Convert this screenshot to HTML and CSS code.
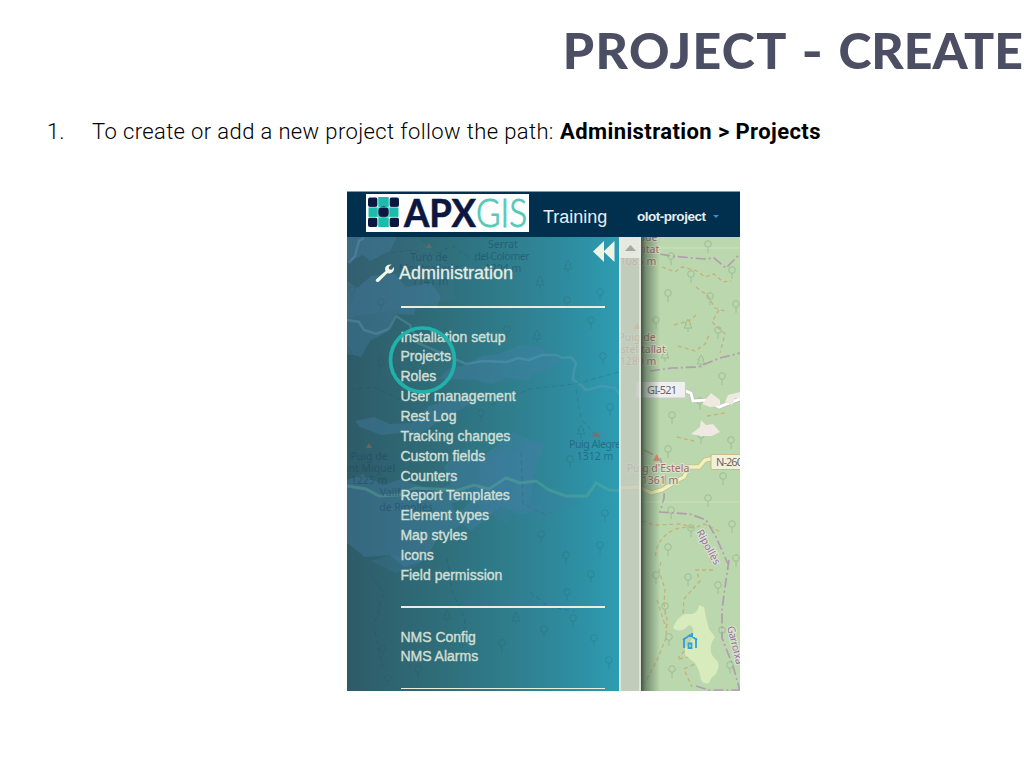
FILE: index.html
```html
<!DOCTYPE html>
<html lang="en">
<head>
<meta charset="utf-8">
<title>Project - Create</title>
<link rel="stylesheet" href="styles.css">
</head>
<body>
<main class="slide">
<h1 class="title"><span class="word">PROJECT</span> <span class="dash">-</span> <span>CREATE</span></h1>
<div class="step"><span class="number">1.</span><p><span class="lead">To create or add a new project follow the path:</span><strong>Administration &gt; Projects</strong></p></div>
<section class="app">
<header class="bar">
<svg class="logo" width="163" height="38" viewBox="366 194 163 38">
<rect x="366" y="194" width="163" height="38" fill="#fff"/>
<g fill="#1bbcae"><rect x="378" y="197" width="11" height="30"/><rect x="368.5" y="207" width="30" height="10"/></g>
<g fill="#0b1741"><rect x="368" y="197.5" width="9.5" height="9.5" rx="2"/><rect x="389.5" y="197.500" width="9.500" height="9.500" rx="2"/><circle cx="383.500" cy="212" r="5.700"/><rect x="368" y="217.500" width="9.500" height="9.500" rx="2"/><rect x="389.500" y="217.500" width="9.500" height="9.500" rx="2"/></g>
<g fill="none" stroke="#fff" stroke-width=".5"><path d="M368 207.300h31M368 217.300h31M378 197v31M389 197v31"/></g>
<text x="404" y="226.500" class="brand" textLength="72" lengthAdjust="spacingAndGlyphs" fill="#0b1741">APX</text>
<text x="476" y="226.500" class="brand thin" textLength="51" lengthAdjust="spacingAndGlyphs" fill="#56c9b7">GIS</text>
</svg>
<span class="env">Training</span><span class="proj">olot-project</span><i class="caret"></i>
</header>
<div class="body">
<svg class="map" width="393" height="454" viewBox="347 237 393 454">
<defs>
<linearGradient id="panel"><stop offset="0" stop-color="#2e5b68"/><stop offset=".35" stop-color="#2f6e7a"/><stop offset=".75" stop-color="#2f8799"/><stop offset="1" stop-color="#2d9cb2"/></linearGradient>
<linearGradient id="shade"><stop offset="0" stop-color="#2c3b2e" stop-opacity=".85"/><stop offset=".25" stop-color="#3c503e" stop-opacity=".55"/><stop offset="1" stop-color="#3c503e" stop-opacity="0"/></linearGradient>
<g id="tree" fill="none" stroke-width="1"><circle r="3.300"/><path d="M0 3v6"/></g>
<g id="fir" fill="none" stroke-width="1"><path d="M0-5l-3 5h1.500l-2.500 4h8l-2.500-4H3zM0 4v4"/></g>
<clipPath id="side"><path d="M347 237h272v454H347z"/></clipPath>
</defs>
<path fill="#bad7ad" d="M347 237h393v454H347z"/>
<g stroke="#9dbe95">
<use href="#tree" x="708" y="244"/><use href="#tree" x="671" y="256"/><use href="#tree" x="732" y="270"/><use href="#tree" x="691" y="274"/><use href="#tree" x="668" y="293"/><use href="#tree" x="710" y="296"/><use href="#tree" x="736" y="304"/><use href="#tree" x="656" y="320"/><use href="#fir" x="688" y="324"/><use href="#tree" x="718" y="330"/><use href="#fir" x="665" y="354"/><use href="#fir" x="701" y="360"/><use href="#tree" x="722" y="376"/><use href="#tree" x="700" y="401"/><use href="#tree" x="672" y="415"/><use href="#tree" x="731" y="440"/><use href="#tree" x="701" y="435"/><use href="#tree" x="668" y="449"/><use href="#tree" x="723" y="476"/><use href="#tree" x="708" y="498"/><use href="#tree" x="671" y="510"/><use href="#tree" x="732" y="524"/><use href="#tree" x="691" y="528"/><use href="#tree" x="668" y="547"/><use href="#tree" x="736" y="558"/><use href="#tree" x="656" y="575"/><use href="#tree" x="688" y="577"/><use href="#tree" x="718" y="585"/><use href="#tree" x="665" y="606"/><use href="#tree" x="722" y="630"/><use href="#tree" x="669" y="637"/><use href="#tree" x="672" y="669"/><use href="#tree" x="730" y="665"/>
</g>
<g fill="none" stroke="#c6b078" stroke-width="1.300" stroke-dasharray="4 3">
<path d="M662 267l13 5 7-5 15 4 8 6 9-3 9 8 8-1M696 287l12 9 7 12 13 4M678 346l17 5 10-7 5-11M674 325l15-4 7-6M719 310l-7 12 13 12-5 19M642 521l13 4 26-1 14 4 9-4 17 8M693 528c-24-5-40 17-37 31M703 546l9 17M661 562l-2 9 6 18-1 15 3 15-1 19-9 22-12 23M713 570l-17 0 4 11-16 18-1 15 12 16-4 14-13 14M679 659l13-3 7 6-15 7 8 18M677 437l17 4M707 416l18-3M657 600l9 28"/>
</g>
<g fill="none" stroke="#b39cae" stroke-width="1.700" stroke-dasharray="10 3 2 3">
<path d="M660 254l11 2 33 3 10-1 12 10 14-14M650 371l22-3 26-1 22-9 20-5M644 450l16 8 5 16-1 24-4 14 30 2 16 6 10 17 12 27M729 560l-3 20-4 30 0 28 11 28 7 25M696 686l13 4 31 0"/>
</g>
<path d="M686 391l5 2 2 8 13-1 13 7 21-8" fill="none" stroke="#b3b5b0" stroke-width="4"/><path d="M686 391l5 2 2 8 13-1 13 7 21-8" fill="none" stroke="#fff" stroke-width="3"/>
<g fill="#efeae1"><path d="M702 404l9-11 9 7 0 6-10 1zM725 402l3-7 12-3v6l-5 0-3 7zM691 434l9-7 1-7 5 5 7-1 7 8-8 4-11 0z"/></g>
<path d="M673 628q4-11 12-14l7 0q6-1 7-9l5 2q2 12 5 22l6 8q-7 9-3 18l6 7q2 6-3 13-4 2-6 8-5 2-8-3-1-9-6-17l-10-8 0-7q10-9 8-19-3-7-7-1-7 5-13 0z" fill="#d8ebbd"/>
<path d="M619 488l20-1 12 6 11-3 16-10 6-3 5-10 10 0 6-7 11-2" fill="none" stroke="#c1bd91" stroke-width="5"/><path d="M619 488l20-1 12 6 11-3 16-10 6-3 5-10 10 0 6-7 11-2" fill="none" stroke="#f3f1b9" stroke-width="3.500"/>
<path d="M642 248h98M642 502h98" stroke="#fff" stroke-opacity=".25"/>
<g fill="#a66b68" class="place" text-anchor="middle" stroke="#d9e4ce" stroke-width="2" paint-order="stroke">
<text x="637" y="241">Puigdue</text><text x="637" y="253">la Caritat</text><text x="638" y="265">1085 m</text><text x="637" y="341">Puig de</text><text x="637" y="353">Castelltallat</text><text x="638" y="365">1280 m</text><text x="658" y="472">Puig d'Estela</text><text x="660" y="484">1361 m</text>
</g>
<path d="M657 454l3 7h-7zM637 323l4 6h-8z" fill="#dc8d61"/>
<g class="place" fill="#966f9c" stroke="#dce6d1" stroke-width="2" paint-order="stroke"><text transform="translate(696 532) rotate(61)">Ripollès</text><text transform="translate(727 627) rotate(76)" textLength="39">Garrotxa</text></g>
<rect x="636" y="381.500" width="49.500" height="16.500" rx="1.500" fill="#f0eff0" stroke="#cbcbcb"/><text x="647" y="394" class="road" textLength="30">GI-521</text>
<rect x="711" y="454.500" width="35" height="15" rx="1.500" fill="#f2f0db" stroke="#c8bb87"/><text x="716" y="466" class="road" textLength="27">N-260</text>
<g fill="none" stroke="#329fd9" stroke-width="1.800"><path d="M683 640l7-5 7 5M684 638v10M696 638v10M688.500 648v-4.500h3v4.500zM692 633v4"/></g>
<path fill="url(#panel)" d="M347 237h272v454H347z"/>
<g clip-path="url(#side)">
<g fill="#457fa8" fill-opacity=".36">
<path d="M347 237h50l-7 14-20 10-7-6-16 8zM347 281l10 7 14-12 24-2 11 13 25-4 10 13-4 13-21-2-2 8-19-1-8 18-17 9-9 16-17-4zM438 379l12-11 16-3 16-9 16-2 22-9 20 1 19 13-21 9-10 13-21-3-15 6-17-4zM355 421l19-4 16 7 22-1 17-17 34-10 7 8-26 14-29 20-15-5-19 2-21-8zM523 362l15-7 23 4-9 9-21 7zM347 480l16-6 20 11 18-6 31 11 22-6 16 13-19 7 10 21-23 13-14 23-20 6-14-12-25 2-18-14zM444 466l20-17 19 7 31-24 30 14-9 25-5 32 12 6-21 6-20-9-30 25-15-12 16-20-21-13z"/>
<path fill-opacity=".2" d="M482 461l20-12 16 1 18-12 10 6-13 20 4 21 36 12 8 6-24 6-19 10-7-10-16 2-8 13-17-10-16-13zM371 561l20-6 33 3-8 9-20 6z"/>
</g>
<path d="M347 237h70l34 30 4 33-108 18z" fill="#557ea2" fill-opacity=".13"/>
<g fill="none" stroke="#68a0ba" stroke-opacity=".35" stroke-width="2.500"><path d="M347 320l12 2 5 8 12 4 13-5 7-13 14 9 8 18 23 10 25 11 17-3 24 1 11-4 11 2 13-5 14 0 6 3 9-1 5 6-2 8-1 9 8 5 5 5 16-4 13 2 5 7 9-6 12 2M349 263l6-7 4-15 5-3"/></g>
<path d="M347 486l19 3 13 7 20-1 16-7 23 1 17 2 19-6 15 4 17-11 14 5 16-2 13 9 17 6 21 0 9-13 13 7 30 1" fill="none" stroke="#66b499" stroke-opacity=".35" stroke-width="3"/>
<g fill="none" stroke="#173f54" stroke-opacity=".18" stroke-dasharray="5 3"><path d="M391 253l22-3 18 6 21-10 24 15 18-4M491 405l39-16 45-5 44-12M576 389l5 30 16 18M521 452l2 52 25 12M447 558l5 33 13 28-4 44M350 390l23-3 26 12 44-7M370 575l14 17-10 34 9 42M530 592l19 15 26 4"/></g>
<g stroke="#214f61" stroke-opacity=".2"><use href="#tree" x="352" y="290"/><use href="#tree" x="381" y="302"/><use href="#fir" x="381" y="361"/><use href="#fir" x="349" y="352"/><use href="#tree" x="507" y="329"/><use href="#tree" x="481" y="413"/><use href="#tree" x="567" y="300"/><use href="#fir" x="568" y="265"/><use href="#fir" x="540" y="281"/><use href="#tree" x="600" y="292"/><use href="#tree" x="591" y="320"/><use href="#tree" x="603" y="356"/><use href="#fir" x="537" y="335"/><use href="#tree" x="610" y="407"/><use href="#fir" x="581" y="430"/><use href="#tree" x="570" y="459"/><use href="#tree" x="605" y="513"/><use href="#tree" x="541" y="534"/><use href="#tree" x="566" y="555"/><use href="#tree" x="600" y="545"/><use href="#tree" x="591" y="574"/><use href="#tree" x="567" y="592"/><use href="#tree" x="544" y="629"/><use href="#tree" x="573" y="618"/><use href="#tree" x="594" y="638"/><use href="#tree" x="609" y="660"/><use href="#tree" x="502" y="643"/><use href="#tree" x="383" y="648"/><use href="#tree" x="418" y="669"/><use href="#tree" x="388" y="678"/><use href="#fir" x="447" y="615"/><use href="#fir" x="516" y="617"/></g>
<g class="place" text-anchor="middle" fill="#1c4462" fill-opacity=".5"><text x="429" y="261">Turó de</text><text x="429" y="272">Montsallada</text><text x="430" y="285">1141 m</text><text x="503" y="248">Serrat</text><text x="502" y="260" textLength="55">del Colomer</text><text x="503" y="272">1204 m</text><text x="369" y="460">Puig de</text><text x="366" y="472">Sant Miquel</text><text x="369" y="484">1225 m</text><text x="406" y="496">Vallfogona</text><text x="406" y="511">de Ripollès</text><text x="595" y="448" textLength="52">Puig Alegre</text><text x="595" y="460">1312 m</text></g>
<g fill="#8b655c" fill-opacity=".65"><path d="M429 243l3 5h-6zM369 443l3 5h-6zM596 431l5 6h-9z"/></g>
</g>
<path fill="#c3c9be" fill-opacity=".8" d="M619 237h23v454h-23z"/><path fill="#eef0e9" fill-opacity=".8" d="M619 237h22v21h-22z"/><path d="M620 237v454M640 237v454" stroke="#e9ede2" stroke-width="1.500"/><path d="M625 251l5.500-6 5.500 6z" fill="#a3aaa3"/>
<path fill="url(#shade)" d="M641 237h19v454h-19z"/><path d="M641.500 237v454" stroke="#4b574c"/>
</svg>
<nav class="menu">
<h2><svg width="20" height="20" viewBox="0 0 20 20"><path fill="#f2f6e9" d="M1 16.500L10.500 8C9 4 12 .8 16.500 1.500L13.700 4.300l.5 2 2.300.4L19 4c.7 5-3.300 7.500-6.700 6.200L4 18.500C2 20 0 18 1 16.500z"/></svg><span>Administration</span></h2>
<hr>
<ul><li>Installation setup</li><li>Projects</li><li>Roles</li><li>User management</li><li>Rest Log</li><li>Tracking changes</li><li>Custom fields</li><li>Counters</li><li>Report Templates</li><li>Element types</li><li>Map styles</li><li>Icons</li><li>Field permission</li></ul>
<hr>
<ul><li>NMS Config</li><li>NMS Alarms</li></ul>
<hr class="last">
</nav>
<svg class="overlay" width="393" height="454" viewBox="347 237 393 454"><path d="M604 241v21l-11-10.500zM614.500 241v21l-11-10.500z" fill="#edf3e7"/><circle cx="422.500" cy="360" r="32" fill="none" stroke="#20b2aa" stroke-width="3.700"/></svg>
</div>
</section>
</main>
</body>
</html>
```
FILE: styles.css
```css
*{box-sizing:border-box}
body{margin:0;background:#fff;color:#000;overflow:hidden}
.slide{width:1024px;height:768px;overflow:hidden}
.title{display:flex;justify-content:flex-end;margin:0;height:102px;padding:16px 1px 0 0;white-space:nowrap;font:900 50px/68px Lato,sans-serif;color:#4c4e64}
.word{letter-spacing:1.4px}
.dash{margin:0 17px 0 15px;transform:scaleX(1.15)}
.step{display:flex;height:89px;padding:15px 0 0 47px;font:300 22px/30px Roboto,sans-serif}
.step p{display:flex;margin:0;white-space:nowrap}
.number{width:45px}
.lead{width:468px;letter-spacing:.38px}
.step strong{font-weight:700;letter-spacing:.4px}
.app{width:393px;height:500px;margin-left:347px;overflow:hidden}
.bar{display:flex;align-items:center;height:46px;padding-left:19px;background:#00304d;border-top:1px solid #8298a7;color:#e9eef2;font-family:"Liberation Sans",sans-serif;white-space:nowrap}
.logo{flex:none;margin-top:-4px}
.brand{font:700 39px Lato,sans-serif;stroke:#0b1741;stroke-width:.6}
.thin{font-weight:300;stroke:#56c9b7;stroke-width:1}
.env{flex:none;width:108px;padding:5px 0 0 14px;font-size:18px}
.proj{flex:none;width:76px;padding-top:4px;font-size:13.5px;letter-spacing:-.48px;font-weight:700}
.caret{margin-top:4px;border:3px solid transparent;border-top-color:#398bcb;border-bottom:0}
.body{display:grid;height:454px}
.map,.menu,.overlay{grid-area:1/1;display:block}
.place{font:10.5px "Noto Sans",sans-serif}
.road{font:11px "Noto Sans",sans-serif;fill:#666}
.menu{width:272px;font:14px/19.85px "Liberation Sans",sans-serif;color:#d0dfd4;-webkit-text-stroke:.4px #d0dfd4}
.menu h2{display:flex;align-items:center;gap:4px;height:69px;margin:0;padding:3px 0 0 28px;font-size:18px;font-weight:400;line-height:22px;color:#edf3e9}
.menu hr{width:204px;height:2px;margin:0 0 0 54px;border:0;background:#e8eee0}
.menu ul{height:298px;margin:0;padding:19.6px 0 0 53.4px;list-style:none;white-space:nowrap}
.menu ul+hr+ul{height:80px}
.menu hr.last{height:1px}
```
